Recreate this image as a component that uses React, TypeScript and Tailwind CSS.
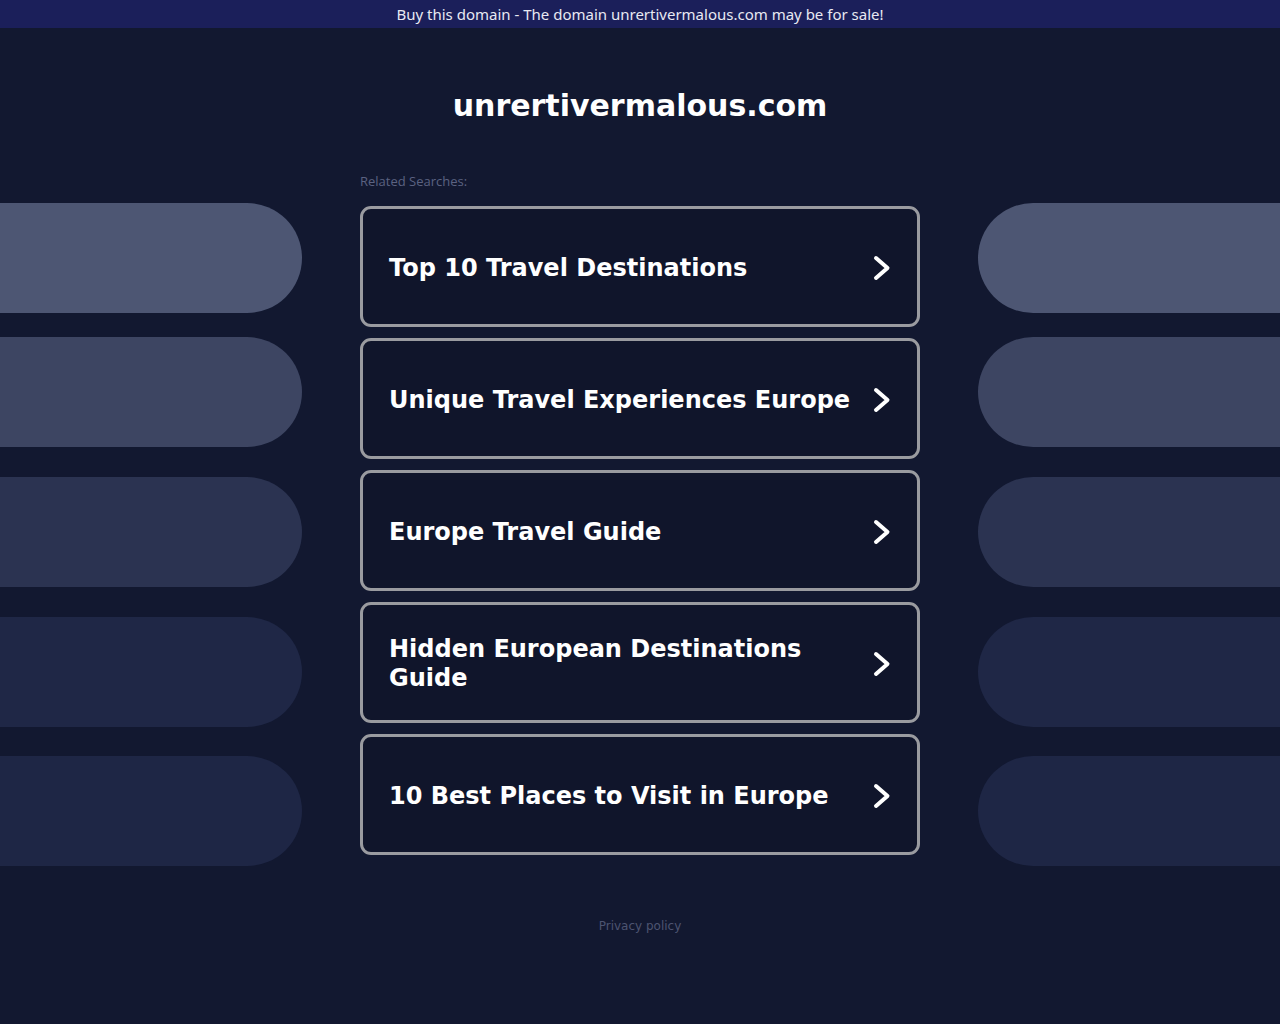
import React from "react";

const cards = [
  "Top 10 Travel Destinations",
  "Unique Travel Experiences Europe",
  "Europe Travel Guide",
  "Hidden European Destinations Guide",
  "10 Best Places to Visit in Europe",
];

const pills = [
  { color: "bg-[#4d5673]", mt: "mt-[175px]" },
  { color: "bg-[#3d4562]", mt: "mt-[24px]" },
  { color: "bg-[#2b3351]", mt: "mt-[30px]" },
  { color: "bg-[#1f2746]", mt: "mt-[30px]" },
  { color: "bg-[#1e2645]", mt: "mt-[29px]" },
];

function Chevron() {
  return (
    <svg width="20" height="28" viewBox="0 0 20 28" className="shrink-0 mt-[2px]">
      <path d="M4 4 L15.5 14 L4 24" fill="none" stroke="white" strokeWidth="4" strokeLinecap="round" strokeLinejoin="round" />
    </svg>
  );
}

export default function App() {
  return (
    <div className="min-h-[1024px] bg-[#121830] text-white">
      <div className="h-[28px] bg-[#1b1f5a] flex items-center justify-center text-[15px] text-[#e8e9f2] font-['Noto_Sans',sans-serif]">
        Buy this domain - The domain unrertivermalous.com may be for sale!
      </div>
      <div className="flex">
        <div className="w-[302px] flex flex-col">
          {pills.map((p, i) => (
            <div key={i} className={`${p.mt} h-[110px] rounded-r-[55px] ${p.color}`} />
          ))}
        </div>
        <div className="mx-[58px] w-[560px] flex flex-col">
          <h1 className="mt-[59px] h-[38px] text-center text-[30px] leading-[38px] font-bold font-['DejaVu_Sans',sans-serif] text-white">
            unrertivermalous.com
          </h1>
          <div className="mt-[47px] text-[13px] leading-[18px] text-[#5b6281] font-['Open_Sans',sans-serif]">
            Related Searches:
          </div>
          <div className="mt-[16px] flex flex-col gap-[11px]">
            {cards.map((c) => (
              <div
                key={c}
                className="h-[121px] rounded-[11px] border-[3px] border-[#9a9ba0] bg-[#10152b] flex items-center justify-between pl-[26px] pr-[25px]"
              >
                <span className="text-[24px] leading-[29px] font-bold font-['DejaVu_Sans',sans-serif] text-white pr-2 pt-[3px]">
                  {c}
                </span>
                <Chevron />
              </div>
            ))}
          </div>
          <div className="mt-[62px] text-center text-[12px] text-[#4d5471] font-['DejaVu_Sans',sans-serif]">
            Privacy policy
          </div>
        </div>
        <div className="w-[302px] flex flex-col">
          {pills.map((p, i) => (
            <div key={i} className={`${p.mt} h-[110px] rounded-l-[55px] ${p.color}`} />
          ))}
        </div>
      </div>
    </div>
  );
}
